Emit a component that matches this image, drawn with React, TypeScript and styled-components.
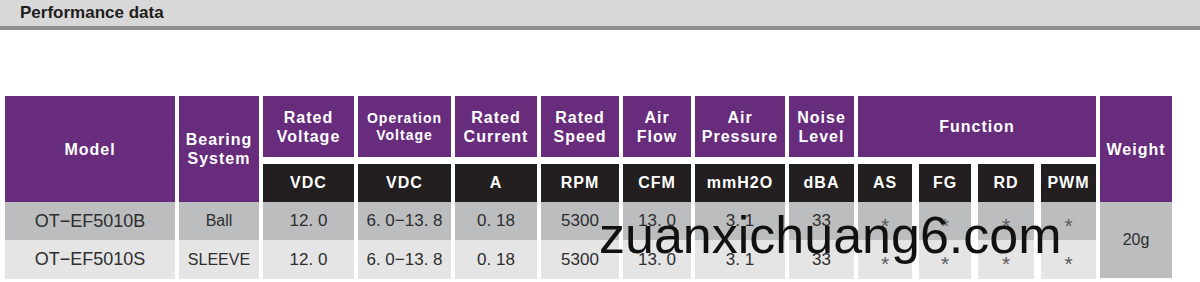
import styled, { createGlobalStyle } from "styled-components";

const GlobalStyle = createGlobalStyle`
  html, body {
    margin: 0;
    padding: 0;
    background: #ffffff;
  }
  body {
    font-family: "Liberation Sans", Arial, sans-serif;
  }
`;

const PURPLE = "#672c7b";
const BLACK = "#231f20";

const Page = styled.div`
  position: relative;
  width: 1200px;
  height: 282px;
  overflow: hidden;
`;

const TitleBar = styled.div`
  height: 26px;
  background: #d8d8d8;
  border-bottom: 4px solid #8e8e8e;
  display: flex;
  align-items: center;
  padding-left: 20px;
`;

const Title = styled.h2`
  margin: 0;
  font-size: 17px;
  font-weight: 700;
  color: #1e1e1e;
`;

const Table = styled.div`
  display: flex;
  gap: 4px;
  margin-top: 66px;
  padding-left: 5px;
`;

const Column = styled.div<{ $w: number }>`
  display: flex;
  flex-direction: column;
  width: ${(p) => p.$w}px;
`;

const HeadCell = styled.div<{ $tall?: boolean; $small?: boolean }>`
  height: ${(p) => (p.$tall ? 106 : 61)}px;
  background: ${PURPLE};
  color: #ffffff;
  display: flex;
  align-items: center;
  justify-content: center;
  text-align: center;
  font-weight: 700;
  font-size: ${(p) => (p.$small ? 14 : 16)}px;
  line-height: ${(p) => (p.$small ? 17 : 19)}px;
  letter-spacing: 1px;
`;

const UnitCell = styled.div`
  height: 38px;
  margin-top: 7px;
  background: ${BLACK};
  color: #ffffff;
  display: flex;
  align-items: center;
  justify-content: center;
  font-weight: 700;
  font-size: 16px;
  letter-spacing: 1px;
`;

const DataCell = styled.div<{ $even?: boolean; $h?: number; $size?: number; $mark?: boolean }>`
  box-sizing: border-box;
  height: ${(p) => p.$h ?? (p.$even ? 39 : 38)}px;
  padding-top: ${(p) => (p.$mark ? 9 : 0)}px;
  background: ${(p) => (p.$even ? "#e5e5e6" : "#bcbdbf")};
  color: ${(p) => (p.$mark ? "#5a5a5a" : "#2e2e2e")};
  display: flex;
  align-items: center;
  justify-content: center;
  font-size: ${(p) => p.$size ?? 17}px;
`;

const FunctionGroup = styled.div`
  display: flex;
  flex-direction: column;
  width: 238px;
`;

const SubRow = styled.div`
  display: flex;
  gap: 7px;
`;

const Watermark = styled.div`
  position: absolute;
  left: 599px;
  top: 209px;
  font-family: "Liberation Sans", Arial, sans-serif;
  font-size: 52px;
  line-height: 1;
  color: #111111;
  pointer-events: none;
`;

type Col = {
  w: number;
  head: string[];
  unit?: string;
  small?: boolean;
  rows: string[];
  size?: number;
};

const columns: Col[] = [
  { w: 170, head: ["Model"], rows: ["OT\u2212EF5010B", "OT\u2212EF5010S"], size: 18 },
  { w: 80, head: ["Bearing", "System"], rows: ["Ball", "SLEEVE"], size: 16 },
  { w: 91, head: ["Rated", "Voltage"], unit: "VDC", rows: ["12. 0", "12. 0"] },
  { w: 93, head: ["Operation", "Voltage"], unit: "VDC", small: true, rows: ["6. 0\u221213. 8", "6. 0\u221213. 8"] },
  { w: 82, head: ["Rated", "Current"], unit: "A", rows: ["0. 18", "0. 18"] },
  { w: 78, head: ["Rated", "Speed"], unit: "RPM", rows: ["5300", "5300"] },
  { w: 68, head: ["Air", "Flow"], unit: "CFM", rows: ["13. 0", "13. 0"] },
  { w: 90, head: ["Air", "Pressure"], unit: "mmH2O", rows: ["3. 1", "3. 1"] },
  { w: 65, head: ["Noise", "Level"], unit: "dBA", rows: ["33", "33"] },
];

const functions = [
  { w: 54, name: "AS" },
  { w: 52, name: "FG" },
  { w: 56, name: "RD" },
  { w: 55, name: "PWM" },
];

function HeadText({ lines }: { lines: string[] }) {
  return (
    <span>
      {lines.map((l, i) => (
        <span key={i}>
          {i > 0 && <br />}
          {l}
        </span>
      ))}
    </span>
  );
}

export default function App() {
  return (
    <Page>
      <GlobalStyle />
      <TitleBar>
        <Title>Performance data</Title>
      </TitleBar>

      <Table>
        {columns.map((c) => (
          <Column key={c.head.join(" ")} $w={c.w}>
            <HeadCell $tall={!c.unit} $small={c.small}>
              <HeadText lines={c.head} />
            </HeadCell>
            {c.unit && <UnitCell>{c.unit}</UnitCell>}
            <DataCell $size={c.size}>{c.rows[0]}</DataCell>
            <DataCell $even $size={c.size}>{c.rows[1]}</DataCell>
          </Column>
        ))}

        <FunctionGroup>
          <HeadCell>Function</HeadCell>
          <SubRow>
            {functions.map((f) => (
              <Column key={f.name} $w={f.w}>
                <UnitCell>{f.name}</UnitCell>
                <DataCell $mark $size={21}>*</DataCell>
                <DataCell $mark $even $size={21}>*</DataCell>
              </Column>
            ))}
          </SubRow>
        </FunctionGroup>

        <Column $w={72}>
          <HeadCell $tall>Weight</HeadCell>
          <DataCell $h={76} $size={16}>20g</DataCell>
        </Column>
      </Table>

      <Watermark>zuanxichuang6.com</Watermark>
    </Page>
  );
}
